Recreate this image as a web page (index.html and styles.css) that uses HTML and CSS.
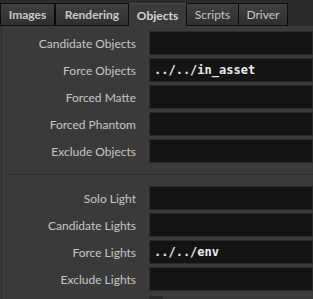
FILE: index.html
```html
<!DOCTYPE html>
<html>
<head>
<meta charset="utf-8">
<link rel="stylesheet" href="styles.css">
</head>
<body>
<div class="tabbar">
  <div class="tab mod t-images">Images</div>
  <div class="tab mod t-render">Rendering</div>
  <div class="tab active t-objects">Objects</div>
  <div class="tab t-scripts">Scripts</div>
  <div class="tab t-driver">Driver</div>
</div>
<div class="panel">
  <div class="section">
    <div class="row"><div class="label">Candidate Objects</div><div class="field"></div></div>
    <div class="row"><div class="label">Force Objects</div><div class="field">../../in_asset</div></div>
    <div class="row"><div class="label">Forced Matte</div><div class="field"></div></div>
    <div class="row"><div class="label">Forced Phantom</div><div class="field"></div></div>
    <div class="row"><div class="label">Exclude Objects</div><div class="field"></div></div>
  </div>
  <div class="sep"></div>
  <div class="section second">
    <div class="row"><div class="label">Solo Light</div><div class="field"></div></div>
    <div class="row"><div class="label">Candidate Lights</div><div class="field"></div></div>
    <div class="row"><div class="label">Force Lights</div><div class="field">../../env</div></div>
    <div class="row"><div class="label">Exclude Lights</div><div class="field"></div></div>
    <div class="row stubrow"><div class="label"></div><div class="stub"></div></div>
  </div>
</div>
</body>
</html>
```
FILE: styles.css
```css
html, body {
  margin: 0;
  padding: 0;
  background: #3a3a3a;
  height: 100%;
  overflow: hidden;
}
body {
  font-family: Lato, "Noto Sans", sans-serif;
}
.tabbar {
  display: flex;
  align-items: flex-start;
  height: 26px;
  padding-top: 3px;
  box-sizing: border-box;
  background: #2b2b2b;
}
.tab {
  height: 23px;
  box-sizing: border-box;
  border: 1px solid #0c0c0c;
  background: linear-gradient(#404040, #2f2f2f);
  color: #c9c9c9;
  font-size: 12px;
  display: flex;
  align-items: center;
  justify-content: center;
}
.tab.mod { font-weight: bold; }
.tab.active {
  background: #3a3a3a;
  border: 0;
  border-top: 1px solid #4a4a4a;
  font-weight: bold;
  color: #d6d6d6;
}
.t-images { width: 55px; }
.t-render { width: 74px; }
.t-objects { width: 57px; }
.t-scripts { width: 53px; }
.t-driver { width: 50px; margin-left: -1px; }
.panel {
  border-left: 1px solid #2c2c2c;
  margin-left: 1px;
  height: 273px;
  overflow: hidden;
}
.section {
  display: flex;
  flex-direction: column;
  gap: 3px;
  padding-top: 5px;
}
.section.second {
  padding-top: 11px;
}
.row {
  display: flex;
  align-items: center;
  height: 24px;
  flex: none;
}
.stubrow {
  align-items: flex-start;
  height: 4px;
  margin-top: 2px;
}
.label {
  width: 134px;
  text-align: right;
  color: #c8c8c8;
  font-size: 12px;
  flex: none;
}
.field {
  margin-left: 13px;
  flex: 1;
  height: 24px;
  box-sizing: border-box;
  border: 1px solid #2a2a2a;
  background: #131313;
  color: #ececec;
  font-family: "DejaVu Sans Mono", monospace;
  font-weight: bold;
  font-size: 12px;
  line-height: 22px;
  padding-left: 4px;
  white-space: pre;
}
.stub {
  margin-left: 13px;
  width: 14px;
  height: 4px;
  background: #2a2a2a;
}
.sep {
  margin: 11px 0 0 4px;
  height: 1px;
  background: #2f2f2f;
}
```
